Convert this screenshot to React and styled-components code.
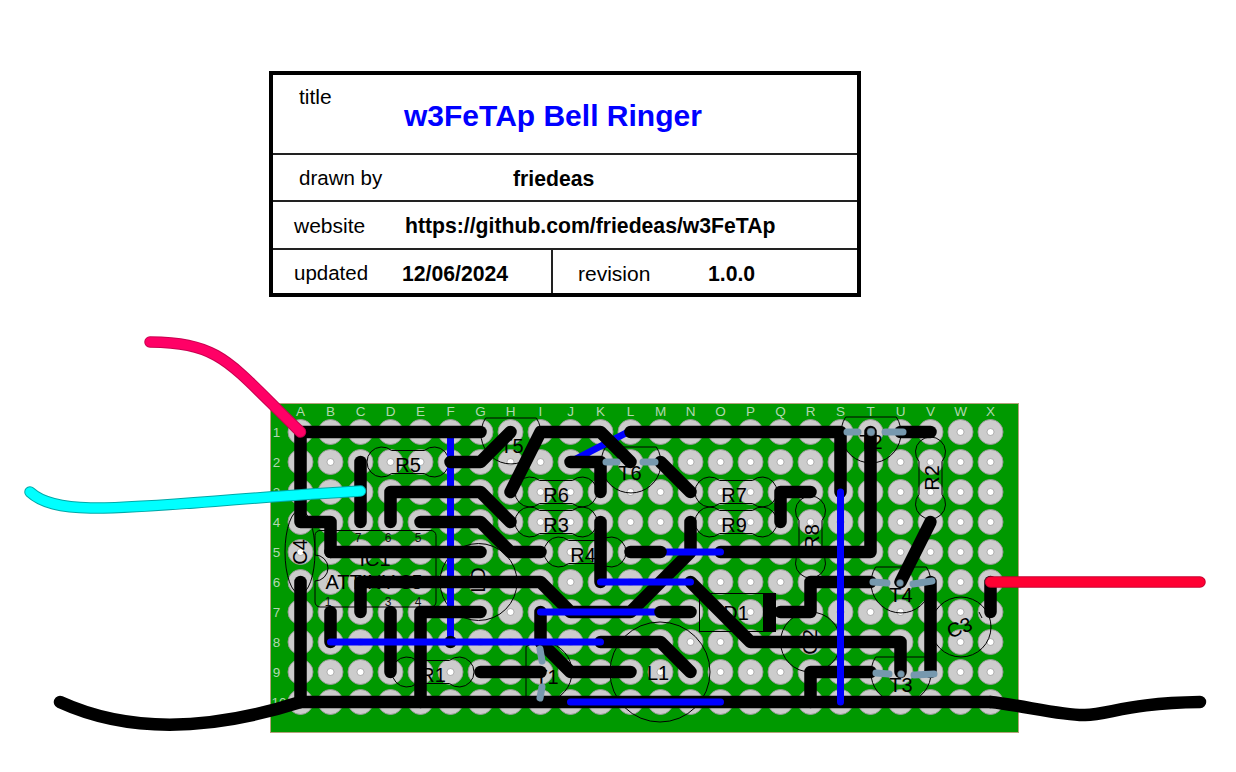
import React from 'react';
import styled, { createGlobalStyle } from 'styled-components';

const COLS = 'ABCDEFGHIJKLMNOPQRSTUVWX'.split('');
const ROWS = [1, 2, 3, 4, 5, 6, 7, 8, 9, 10];

const colX = (c) => 300.5 + 30 * COLS.indexOf(c);
const rowY = (r) => 432 + 30 * (r - 1);
// "A1 G1 H2" -> svg points
const pts = (s) =>
  s
    .split(' ')
    .map((p) => `${colX(p[0])},${rowY(Number(p.slice(1)))}`)
    .join(' ');

const TRACES = [
  'A1 G1',
  'B5 G5',
  'A1 A4 B4 B5',
  'C2 C4',
  'D4 D3 G3 H4',
  'E4 G4 H5 I5',
  'F2 G2 H1',
  'H3 I1 K1 L2',
  'J2 K2 K3',
  'L1 S1 S3',
  'M2 N3',
  'K4 K6',
  'O5 T5 T1',
  'C7 C6 I6 J7 L7 N5 N4',
  'I7 I8 J9 L9',
  'G9 I9',
  'K8 M8 N9',
  'B7 B8',
  'D7 D9',
  'E10 E7 G7',
  'A6 A10',
  'A10 X10',
  'N6 P8 U8 U9',
  'V6 V9',
  'Q7 R7 R6 T6',
  'R10 R9 T9',
  'U6 V4',
  'Q4 Q3 R3',
  'U1 V1',
  'X7 X6',
];

const JUMPERS = ['B8 K8', 'K6 N6', 'I7 M7', 'M5 O5', 'J10 O10', 'S3 S10'];

const RESISTORS = [
  { name: 'R5', x: 408, y: 462 },
  { name: 'R6', x: 556, y: 492 },
  { name: 'R3', x: 556, y: 522 },
  { name: 'R4', x: 585, y: 552, dx: -2 },
  { name: 'R7', x: 736, y: 492, dx: -2 },
  { name: 'R9', x: 736, y: 522, dx: -2 },
  { name: 'R1', x: 433, y: 672 },
  { name: 'R2', x: 930.5, y: 478, turn: -90 },
  { name: 'R8', x: 810.5, y: 537, turn: -90 },
];

const TRANSISTORS = [
  { name: 'T5', x: 511, y: 434, lx: 512, ly: 446 },
  { name: 'T6', x: 631, y: 463, lx: 630, ly: 473 },
  { name: 'T2', x: 871, y: 433, lx: 871, ly: 442 },
  { name: 'T4', x: 901, y: 583, lx: 901, ly: 595 },
  { name: 'T3', x: 901, y: 673, lx: 901, ly: 685 },
  { name: 'T1', x: 542, y: 672, lx: 547, ly: 677, turn: -90 },
];

const LEADS = [
  '847,432 858,432',
  '885,432 903,432',
  '606,462 617,462',
  '643,462 655,462',
  '873,582 887,583',
  '913,584 932,581',
  '876,673 889,674',
  '914,675 934,674',
  '540,649 542,661',
  '542,687 540,698',
];

const GlobalStyle = createGlobalStyle`
  html, body {
    margin: 0;
    background: #fff;
    font-family: "Liberation Sans", Arial, sans-serif;
    overflow: hidden;
  }
`;

const Page = styled.div`
  display: flex;
  flex-direction: column;
  width: 1236px;
  height: 772px;
  padding-top: 71px;
  box-sizing: border-box;
`;

const TitleBlock = styled.div`
  width: 592px;
  height: 226px;
  margin-left: 269px;
  box-sizing: border-box;
  border: 4px solid #000;
  color: #000;
`;

const Row = styled.div`
  display: grid;
  grid-template-columns: ${(p) => p.$cols};
  align-items: center;
  height: ${(p) => p.$height}px;
  padding-left: ${(p) => p.$pad}px;
  border-bottom: 2px solid #222;
`;

const SplitRow = styled.div`
  display: grid;
  grid-template-columns: 280px 1fr;
  height: 43px;
`;

const Cell = styled.div`
  display: grid;
  grid-template-columns: ${(p) => p.$cols};
  align-items: center;
  padding-left: ${(p) => p.$pad}px;
  border-right: ${(p) => (p.$divider ? '2px solid #222' : 'none')};
`;

const Label = styled.span`
  font-size: ${(p) => p.$size || 21}px;
  white-space: nowrap;
  transform: translateY(${(p) => p.$shift || 0}px);
`;

const Value = styled.span`
  font-size: 21.2px;
  font-weight: 700;
  white-space: nowrap;
  transform: translateY(${(p) => p.$shift || 0}px);
`;

const Heading = styled.h1`
  margin: 0;
  font-size: 30px;
  font-weight: 700;
  color: #0000ff;
  white-space: nowrap;
  transform: translateY(2px);
`;

const Sheet = styled.svg`
  display: block;
  flex: none;
  margin-top: 23px;
`;

const Board = styled.rect`
  fill: #009900;
  stroke: #b3a27a;
  stroke-width: 1;
`;

const Pad = styled.circle`
  fill: #cccccc;
  stroke: #999999;
  stroke-width: 1;
`;

const Hole = styled.circle`
  fill: #ffffff;
  stroke: #8a8a8a;
  stroke-width: 0.6;
`;

const GridLabel = styled.text`
  fill: #b0d8b0;
  font-size: 13.5px;
  text-anchor: middle;
`;

const Outline = styled.path`
  fill: none;
  stroke: #000;
  stroke-width: 1;
`;

const Ring = styled.circle`
  fill: none;
  stroke: #000;
  stroke-width: 1;
`;

const PartBox = styled.rect`
  fill: none;
  stroke: #000;
  stroke-width: 1;
`;

const PartLabel = styled.text`
  fill: #000;
  font-size: 20px;
  text-anchor: middle;
`;

const PinLabel = styled.text`
  fill: #111;
  font-size: 12px;
  text-anchor: middle;
`;

const Trace = styled.polyline`
  fill: none;
  stroke: #000;
  stroke-width: 12.5;
  stroke-linecap: round;
  stroke-linejoin: round;
`;

const Jumper = styled.polyline`
  fill: none;
  stroke: #0000ff;
  stroke-width: 7;
  stroke-linecap: ${(p) => p.$cap || 'round'};
`;

const Lead = styled.polyline`
  fill: none;
  stroke: #7698ae;
  stroke-width: 7;
  stroke-linecap: round;
`;

const LeadDot = styled.circle`
  fill: #7698ae;
  stroke: #555;
  stroke-width: 0.5;
`;

const WireEdge = styled.path`
  fill: none;
  stroke: ${(p) => p.$color};
  stroke-width: 11.5;
  stroke-linecap: round;
`;

const WireCore = styled.path`
  fill: none;
  stroke: ${(p) => p.$color};
  stroke-width: 9.5;
  stroke-linecap: round;
`;

function Wire({ d, edge, core }) {
  return (
    <>
      <WireEdge d={d} $color={edge} />
      <WireCore d={d} $color={core} />
    </>
  );
}

function Resistor({ name, x, y, turn = 0, dx = 0 }) {
  return (
    <g transform={`translate(${x} ${y}) rotate(${turn})`}>
      <Outline d="M -16.4,-11.5 L 16.4,-11.5 A 15 15 0 1 1 16.4,11.5 L -16.4,11.5 A 15 15 0 1 1 -16.4,-11.5 Z" />
      <PartLabel x={dx} y={turn ? 8 : 10}>
        {name}
      </PartLabel>
    </g>
  );
}

function Transistor({ name, x, y, lx, ly, turn = 0 }) {
  return (
    <>
      <g transform={`translate(${x} ${y}) rotate(${turn})`}>
        <Outline d="M -25.4,-16 L 25.4,-16 A 30 30 0 1 1 -25.4,-16 Z" />
      </g>
      <PartLabel x={lx} y={ly + 7}>
        {name}
      </PartLabel>
    </>
  );
}

function Pads() {
  return ROWS.map((r) =>
    COLS.map((c) => (
      <g key={c + r}>
        <Pad cx={colX(c)} cy={rowY(r)} r={12.5} />
        <Hole cx={colX(c)} cy={rowY(r)} r={3.5} />
      </g>
    ))
  );
}

function BoardLayout() {
  return (
    <Sheet width="1236" height="452" viewBox="0 320 1236 452">
      <Board x="270.5" y="403.5" width="748" height="329" />
      {COLS.map((c) => (
        <GridLabel key={c} x={colX(c)} y="416">
          {c}
        </GridLabel>
      ))}
      {ROWS.map((r) => (
        <GridLabel key={r} x={r === 10 ? 279 : 276.5} y={rowY(r) + 5}>
          {r}
        </GridLabel>
      ))}
      <Pads />

      {/* parts sit under the copper, their names get cut by it */}
      {RESISTORS.map((r) => (
        <Resistor key={r.name} {...r} />
      ))}
      {TRANSISTORS.map((t) => (
        <Transistor key={t.name} {...t} />
      ))}
      <Outline d="M 326,530.5 H 431 a 5 5 0 0 1 5 5 V 602 a 5 5 0 0 1 -5 5 H 320 a 5 5 0 0 1 -5 -5 V 581 A 13 13 0 0 0 315,555 V 535.5 a 5 5 0 0 1 5 -5 Z" />
      {[
        [358, 542, '7'],
        [388, 542, '6'],
        [418, 542, '5'],
        [328, 606, '1'],
        [388, 606, '3'],
        [418, 606, '4'],
      ].map(([x, y, n]) => (
        <PinLabel key={n} x={x} y={y}>
          {n}
        </PinLabel>
      ))}
      <PartLabel x="375" y="566">
        IC1
      </PartLabel>
      <PartLabel x="374" y="589">
        ATTINY 85
      </PartLabel>

      <ellipse cx="300" cy="552" rx="15" ry="42" fill="none" stroke="#000" />
      <PartLabel transform="translate(307 552) rotate(-90)">C4</PartLabel>
      <Ring cx="478.5" cy="582" r="38.5" />
      <PartLabel transform="translate(485 580) rotate(-90)">LD</PartLabel>
      <Ring cx="660" cy="672" r="50" />
      <PartLabel x="658" y="680">
        L1
      </PartLabel>
      <PartBox x="699.5" y="593.5" width="76" height="38" />
      <rect x="763" y="593" width="12" height="39" fill="#000" />
      <PartLabel x="736" y="620">
        D1
      </PartLabel>
      <Ring cx="810.5" cy="642" r="30" />
      <PartLabel transform="translate(817 642) rotate(-90)">C2</PartLabel>
      <Ring cx="961" cy="627" r="30" />
      <PartLabel transform="translate(962 634) rotate(-22)">C3</PartLabel>
      <Outline d="M 979,612 L 982,618" />

      {/* under the copper on both ends */}
      <Jumper points="570,462 628,432" />
      <Jumper points="450.5,438 450.5,642" $cap="butt" />

      {TRACES.map((t) => (
        <Trace key={t} points={pts(t)} />
      ))}
      <Trace points="450.5,642 450.5,642.1" />

      {JUMPERS.map((j) => (
        <Jumper key={j} points={pts(j)} />
      ))}
      <Trace points={pts('N7 M7')} />
      <Trace points={pts('L5 M5')} />

      {LEADS.map((l) => (
        <Lead key={l} points={l} />
      ))}
      <LeadDot cx="871" cy="432" r="4" />
      <LeadDot cx="900" cy="583" r="3.5" />
      <LeadDot cx="901" cy="674" r="3.5" />

      <Wire d="M 150,342 C 222,343 228,362 300.5,432" edge="#c8004f" core="#ff0066" />
      <Wire d="M 30,492 C 62,522 150,503 360.5,491" edge="#00a8a8" core="#00ffff" />
      <Wire d="M 990.5,582 L 1200,582" edge="#c80030" core="#ff0033" />
      <Trace as="path" d="M 60,702 C 130,734 210,731 300.5,702" />
      <Trace as="path" d="M 990.5,702 C 1020,705 1065,716 1085,715 C 1110,714 1130,703 1200,702" />
    </Sheet>
  );
}

export default function App() {
  return (
    <>
      <GlobalStyle />
      <Page>
        <TitleBlock>
          <Row $cols="105px 1fr" $pad={26} $height={78}>
            <Label $shift={-17}>title</Label>
            <Heading>w3FeTAp Bell Ringer</Heading>
          </Row>
          <Row $cols="214px 1fr" $pad={26} $height={45}>
            <Label $size={20.5}>drawn by</Label>
            <Value $shift={1}>friedeas</Value>
          </Row>
          <Row $cols="111px 1fr" $pad={21} $height={46}>
            <Label $shift={1}>website</Label>
            <Value $shift={1}>https://github.com/friedeas/w3FeTAp</Value>
          </Row>
          <SplitRow>
            <Cell $cols="108px 1fr" $pad={21} $divider>
              <Label $size={20.5} $shift={1}>
                updated
              </Label>
              <Value $shift={2}>12/06/2024</Value>
            </Cell>
            <Cell $cols="130px 1fr" $pad={25}>
              <Label $shift={2}>revision</Label>
              <Value $shift={2}>1.0.0</Value>
            </Cell>
          </SplitRow>
        </TitleBlock>
        <BoardLayout />
      </Page>
    </>
  );
}
